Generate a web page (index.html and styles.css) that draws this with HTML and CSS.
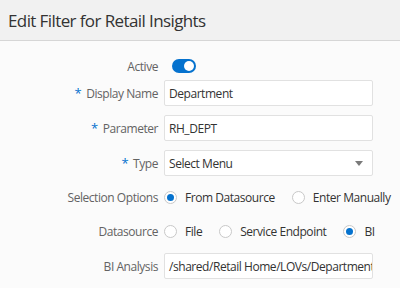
FILE: index.html
```html
<!DOCTYPE html>
<html>
<head>
<meta charset="utf-8">
<link rel="stylesheet" href="styles.css">
</head>
<body>
<div class="header">Edit Filter for Retail Insights</div>
<div class="form">
  <div class="row row-active">
    <div class="label">Active</div>
    <div class="toggle"><span class="knob"></span></div>
  </div>
  <div class="row">
    <div class="label"><span class="req">*</span>Display Name</div>
    <div class="input">Department</div>
  </div>
  <div class="row">
    <div class="label"><span class="req">*</span>Parameter</div>
    <div class="input">RH_DEPT</div>
  </div>
  <div class="row">
    <div class="label"><span class="req">*</span>Type</div>
    <div class="input select"><span>Select Menu</span><span class="arrow"></span></div>
  </div>
  <div class="row row-radio">
    <div class="label">Selection Options</div>
    <div class="radios">
      <span class="opt"><span class="radio on"></span>From Datasource</span>
      <span class="opt"><span class="radio"></span>Enter Manually</span>
    </div>
  </div>
  <div class="row row-radio">
    <div class="label">Datasource</div>
    <div class="radios">
      <span class="opt"><span class="radio"></span>File</span>
      <span class="opt"><span class="radio"></span>Service Endpoint</span>
      <span class="opt"><span class="radio on"></span>BI</span>
    </div>
  </div>
  <div class="row">
    <div class="label">BI Analysis</div>
    <div class="input clip">/shared/Retail Home/LOVs/Department</div>
  </div>
</div>
</body>
</html>
```
FILE: styles.css
```css
html, body {
  margin: 0;
  padding: 0;
  background: #fbfbfb;
  font-family: "Open Sans", "Noto Sans", sans-serif;
  width: 400px;
  height: 288px;
  overflow: hidden;
}
.header {
  box-sizing: border-box;
  background: #f1f1f1;
  border-bottom: 1px solid #d6d6d6;
  height: 41px;
  padding: 9px 0 0 8px;
  font-size: 17px;
  letter-spacing: -0.6px;
  color: #333;
}
.form {
  display: flex;
  flex-direction: column;
  gap: 9px;
  padding-top: 18px;
  letter-spacing: -0.45px;
}
.row {
  display: flex;
  align-items: center;
  height: 26px;
}
.row-active {
  height: 14px;
  margin-bottom: -2px;
}
.row-radio {
  height: 25px;
}
.label {
  width: 158px;
  text-align: right;
  font-size: 12px;
  color: #636363;
  margin-right: 6px;
  white-space: nowrap;
}
.req {
  color: #0572ce;
  margin-right: 5px;
  font-size: 13px;
}
.toggle {
  width: 24px;
  height: 14px;
  border-radius: 7px;
  background: #0572ce;
  margin-left: 8px;
  position: relative;
}
.knob {
  position: absolute;
  right: 2px;
  top: 2px;
  width: 10px;
  height: 10px;
  border-radius: 50%;
  background: #fff;
}
.input {
  width: 209px;
  height: 26px;
  box-sizing: border-box;
  border: 1px solid #e1e1e1;
  border-radius: 2px;
  background: #fff;
  font-size: 12px;
  color: #333;
  padding: 0 4px;
  display: flex;
  align-items: center;
  white-space: nowrap;
  overflow: hidden;
}
.select {
  justify-content: space-between;
  padding-right: 9px;
}
.arrow {
  width: 0;
  height: 0;
  border-left: 4px solid transparent;
  border-right: 4px solid transparent;
  border-top: 5px solid #7a7a7a;
}
.radios {
  display: flex;
  align-items: center;
  gap: 17px;
  font-size: 12px;
  color: #333;
}
.opt {
  display: flex;
  align-items: center;
  white-space: nowrap;
}
.radio {
  width: 13px;
  height: 13px;
  box-sizing: border-box;
  border: 1px solid #c8c8c8;
  border-radius: 50%;
  background: #fff;
  margin-right: 8px;
  position: relative;
}
.radio.on::after {
  content: "";
  position: absolute;
  left: 2px;
  top: 2px;
  width: 7px;
  height: 7px;
  border-radius: 50%;
  background: #0572ce;
}
```
